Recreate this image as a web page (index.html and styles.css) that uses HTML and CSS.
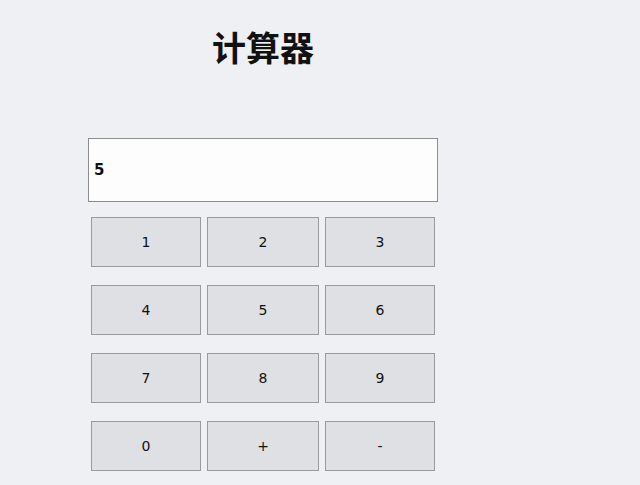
FILE: index.html
```html
<!DOCTYPE html>
<html lang="zh">
<head>
<meta charset="utf-8">
<title>计算器</title>
<link rel="stylesheet" href="styles.css">
</head>
<body>
<div class="calc">
  <h1 class="title">计算器</h1>
  <div class="display">5</div>
  <div class="keys">
    <button class="key">1</button>
    <button class="key">2</button>
    <button class="key">3</button>
    <button class="key">4</button>
    <button class="key">5</button>
    <button class="key">6</button>
    <button class="key">7</button>
    <button class="key">8</button>
    <button class="key">9</button>
    <button class="key">0</button>
    <button class="key">+</button>
    <button class="key">-</button>
  </div>
</div>
</body>
</html>
```
FILE: styles.css
```css
html, body {
  margin: 0;
  padding: 0;
  background: #eef0f3;
  height: 100%;
}
.calc {
  width: 350px;
  margin-left: 88px;
  padding-top: 26px;
  font-family: "DejaVu Sans", "Noto Sans CJK SC", sans-serif;
}
.title {
  margin: 0;
  height: 112px;
  text-align: center;
  font-family: "Noto Sans CJK SC", sans-serif;
  font-size: 34px;
  font-weight: 700;
  line-height: 42px;
  color: #111;
}
.display {
  box-sizing: border-box;
  height: 64px;
  background: #fdfdfe;
  border: 1px solid #8c8c8c;
  padding-left: 5px;
  line-height: 62px;
  font-size: 15px;
  font-weight: 700;
  color: #111;
}
.keys {
  display: grid;
  grid-template-columns: 110px 112px 110px;
  column-gap: 6px;
  row-gap: 18px;
  padding: 15px 3px 0;
}
.key {
  box-sizing: border-box;
  height: 50px;
  background: #dfe0e3;
  border: 1px solid #9a9a9c;
  border-radius: 0;
  font-family: "DejaVu Sans", sans-serif;
  font-size: 14px;
  color: #111;
  padding: 0;
}
```
